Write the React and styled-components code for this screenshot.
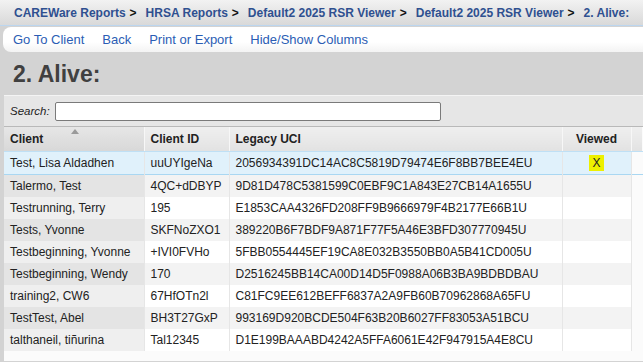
import React from "react";
import styled, { createGlobalStyle } from "styled-components";

const GlobalStyle = createGlobalStyle`
  html, body {
    margin: 0;
    padding: 0;
    background: #d3d3d3;
    font-family: "Liberation Sans", Arial, sans-serif;
    overflow: hidden;
  }
`;

const Page = styled.div`
  width: 643px;
  height: 362px;
  overflow: hidden;
  background: #d3d3d3;
`;

const Breadcrumbs = styled.div`
  height: 26px;
  box-sizing: border-box;
  display: flex;
  align-items: center;
  padding-left: 14px;
  white-space: nowrap;
  background: linear-gradient(#f2f2f2, #d9d9d9);
  border-bottom: 1px solid #bcd6ef;
  font-size: 12px;
  font-weight: bold;
`;

const Crumb = styled.span`
  color: #2f5090;
`;

const Sep = styled.span`
  color: #111;
  padding: 0 9px 0 4px;
`;

const Menu = styled.div`
  margin: 1px 0 0 3px;
  height: 25px;
  display: flex;
  align-items: center;
  gap: 18px;
  padding-left: 10px;
  border-radius: 8px 0 0 8px;
  background: linear-gradient(#ffffff 60%, #f3f3f3);
  font-size: 13px;
`;

const MenuLink = styled.a`
  color: #2b5db4;
  text-decoration: none;
  cursor: pointer;
`;

const Title = styled.h1`
  margin: 0;
  height: 43px;
  box-sizing: border-box;
  padding: 9px 0 0 13px;
  font-size: 23px;
  font-weight: bold;
  color: #404040;
`;

const Panel = styled.div`
  margin-left: 4px;
  background: #fbfbfb;
  height: 266px;
`;

const SearchRow = styled.div`
  height: 32px;
  box-sizing: border-box;
  display: flex;
  align-items: center;
  padding-left: 6px;
  background: #e6e6e6;
  border-top: 1px solid #f4f4f4;
  border-bottom: 1px solid #b9b9b9;
  font-size: 11.5px;
  font-style: italic;
  color: #222;
`;

const SearchInput = styled.input`
  margin-left: 5px;
  width: 386px;
  height: 19px;
  box-sizing: border-box;
  border: 1px solid #7a7a7a;
  border-radius: 2px;
  background: #fff;
`;

const Table = styled.table`
  border-collapse: collapse;
  table-layout: fixed;
  width: 100%;
  font-size: 12px;
`;

const Th = styled.th`
  position: relative;
  height: 24px;
  padding: 0 6px;
  text-align: ${(p) => p.$align || "left"};
  font-weight: bold;
  color: #222;
  background: ${(p) =>
    p.$sorted
      ? "linear-gradient(#e6e6e6, #d8d8d8)"
      : "linear-gradient(#efefef, #e2e2e2)"};
  border-right: 1px solid ${(p) => (p.$last ? "transparent" : "#f7f7f7")};
  border-bottom: 1px solid #bfe0f5;
`;

const SortCaret = styled.svg`
  position: absolute;
  left: 67px;
  top: 2px;
`;

const Tr = styled.tr`
  background: ${(p) => (p.$selected ? "#e0f1fb" : p.$odd ? "#f3f3f3" : "#ffffff")};
  border-bottom: ${(p) => (p.$selected ? "1px solid #a9d7f2" : "none")};
`;

const Td = styled.td`
  height: 22px;
  padding: 0 6px;
  white-space: nowrap;
  overflow: hidden;
  color: #222;
  text-align: ${(p) => p.$align || "left"};
  border-right: 1px solid #e6e6e6;
  background: ${(p) =>
    p.$selected ? "transparent" : p.$sorted ? (p.$odd ? "#e4e4e4" : "#efefef") : "transparent"};
`;

const Filler = styled.td`
  background: #fbfbfb;
`;

const Mark = styled.span`
  background: #edf000;
  padding: 1px 3px;
`;

const rows = [
  ["Test, Lisa Aldadhen", "uuUYIgeNa", "2056934391DC14AC8C5819D79474E6F8BB7BEE4EU", true],
  ["Talermo, Test", "4QC+dDBYP", "9D81D478C5381599C0EBF9C1A843E27CB14A1655U"],
  ["Testrunning, Terry", "195", "E1853CAA4326FD208FF9B9666979F4B2177E66B1U"],
  ["Tests, Yvonne", "SKFNoZXO1", "389220B6F7BDF9A871F77F5A46E3BFD307770945U"],
  ["Testbeginning, Yvonne", "+IVI0FVHo", "5FBB0554445EF19CA8E032B3550BB0A5B41CD005U"],
  ["Testbeginning, Wendy", "170", "D2516245BB14CA00D14D5F0988A06B3BA9BDBDBAU"],
  ["training2, CW6", "67HfOTn2l", "C81FC9EE612BEFF6837A2A9FB60B70962868A65FU"],
  ["TestTest, Abel", "BH3T27GxP", "993169D920BCDE504F63B20B6027FF83053A51BCU"],
  ["talthaneil, tiñurina", "Tal12345", "D1E199BAAABD4242A5FFA6061E42F947915A4E8CU"],
];

const crumbs = [
  "CAREWare Reports",
  "HRSA Reports",
  "Default2 2025 RSR Viewer",
  "Default2 2025 RSR Viewer",
];

export default function App() {
  return (
    <Page>
      <GlobalStyle />
      <Breadcrumbs>
        {crumbs.map((c, i) => (
          <React.Fragment key={i}>
            <Crumb>{c}</Crumb>
            <Sep>&gt;</Sep>
          </React.Fragment>
        ))}
        <Crumb>2. Alive:</Crumb>
      </Breadcrumbs>
      <Menu>
        <MenuLink>Go To Client</MenuLink>
        <MenuLink>Back</MenuLink>
        <MenuLink>Print or Export</MenuLink>
        <MenuLink>Hide/Show Columns</MenuLink>
      </Menu>
      <Title>2. Alive:</Title>
      <Panel>
        <SearchRow>
          Search:
          <SearchInput type="text" />
        </SearchRow>
        <Table>
          <colgroup>
            <col style={{ width: 140 }} />
            <col style={{ width: 85 }} />
            <col style={{ width: 333 }} />
            <col style={{ width: 69 }} />
            <col />
          </colgroup>
          <thead>
            <tr>
              <Th $sorted>
                Client
                <SortCaret width="8" height="5" viewBox="0 0 8 5">
                  <path d="M0 5 L4 0 L8 5 Z" fill="#9a9a9a" />
                </SortCaret>
              </Th>
              <Th>Client ID</Th>
              <Th>Legacy UCI</Th>
              <Th $align="center">Viewed</Th>
              <Th $last />
            </tr>
          </thead>
          <tbody>
            {rows.map(([name, id, uci, viewed], i) => {
              const odd = i % 2 === 1;
              const sel = i === 0;
              return (
                <Tr key={i} $odd={odd} $selected={sel}>
                  <Td $sorted $odd={odd} $selected={sel}>{name}</Td>
                  <Td>{id}</Td>
                  <Td>{uci}</Td>
                  <Td $align="center">{viewed ? <Mark>X</Mark> : null}</Td>
                  <Filler />
                </Tr>
              );
            })}
          </tbody>
        </Table>
      </Panel>
    </Page>
  );
}
